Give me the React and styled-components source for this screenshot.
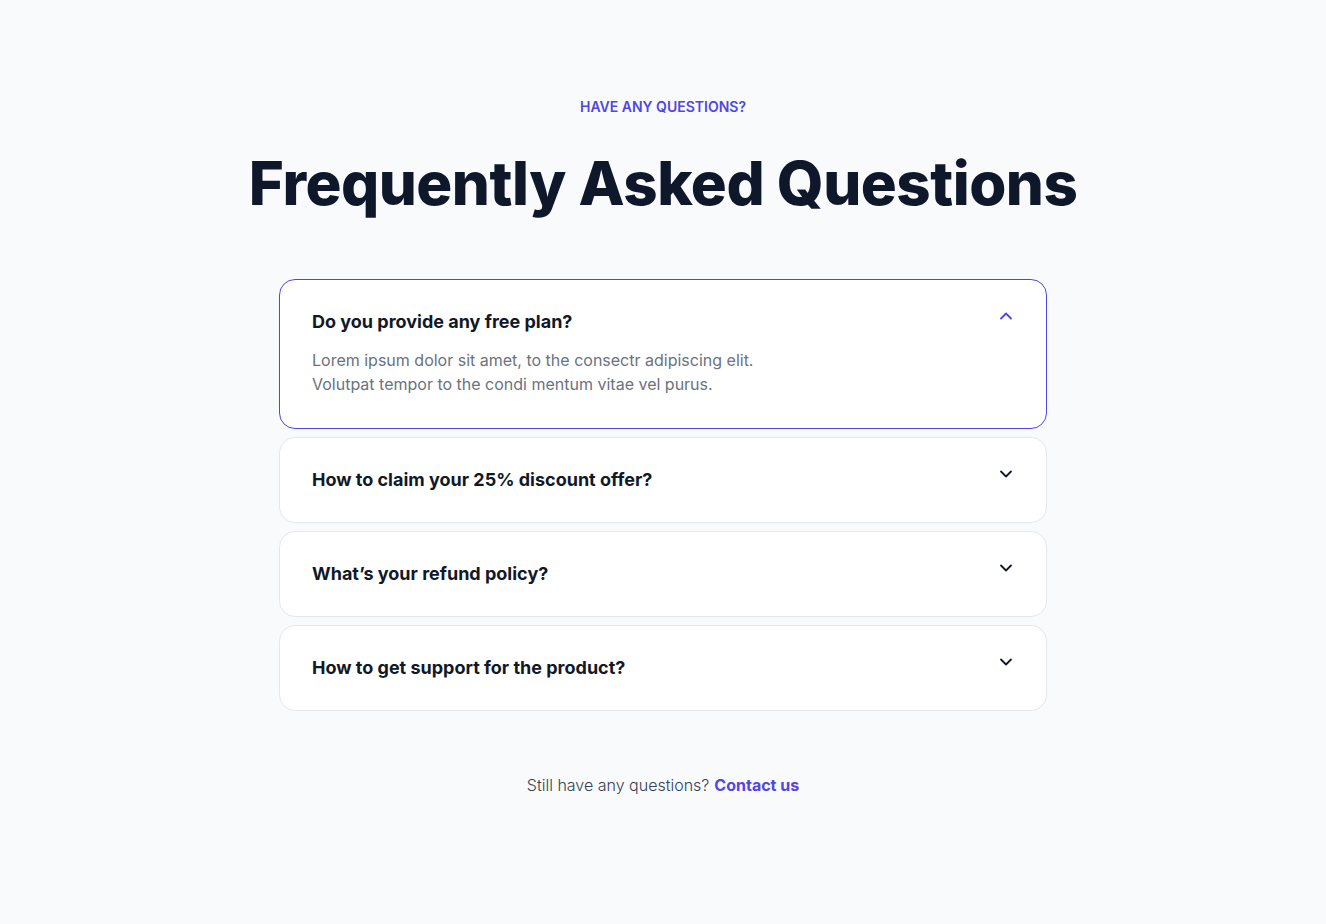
import React, { useState } from 'react';
import styled, { createGlobalStyle } from 'styled-components';

const GlobalStyle = createGlobalStyle`
  body {
    margin: 0;
    background: #f8fafc;
    font-family: Inter, "Noto Sans", sans-serif;
    color: #111827;
  }
`;

const Section = styled.section`
  display: flex;
  flex-direction: column;
  align-items: center;
  padding: 97px 20px 120px;
`;

const Eyebrow = styled.p`
  margin: 0;
  font-size: 14px;
  line-height: 20px;
  font-weight: 600;
  color: #4f46e5;
  text-transform: uppercase;
`;

const Heading = styled.h1`
  margin: 30px 0 0;
  font-size: 60px;
  line-height: 72px;
  font-weight: 800;
  letter-spacing: -0.5px;
  color: #0f172a;
`;

const List = styled.div`
  display: flex;
  flex-direction: column;
  gap: 8px;
  width: 768px;
  margin-top: 60px;
`;

const Card = styled.div`
  background: #ffffff;
  border: 1px solid ${(p) => (p.$open ? '#4f46e5' : '#e5e7eb')};
  border-radius: 16px;
  padding: 28px 32px ${(p) => (p.$open ? '32px' : '28px')};
`;

const Question = styled.button`
  display: flex;
  justify-content: space-between;
  align-items: flex-start;
  width: 100%;
  padding: 0;
  border: 0;
  background: none;
  cursor: pointer;
  text-align: left;
  font-family: inherit;
  font-size: 18px;
  line-height: 28px;
  font-weight: 700;
  color: #111827;
`;

const Chevron = styled.svg`
  flex-shrink: 0;
  color: ${(p) => (p.$open ? '#4f46e5' : '#111827')};
`;

const Answer = styled.p`
  margin: 12px 0 0;
  font-size: 16px;
  line-height: 24px;
  color: #6b7280;
`;

const Footer = styled.p`
  margin: 62px 0 0;
  font-size: 16px;
  line-height: 24px;
  font-weight: 300;
  color: #374151;
`;

const ContactLink = styled.a`
  margin-left: 5px;
  font-weight: 700;
  color: #4f46e5;
  text-decoration: none;
`;

const faqs = [
  {
    q: 'Do you provide any free plan?',
    a: ['Lorem ipsum dolor sit amet, to the consectr adipiscing elit.', 'Volutpat tempor to the condi mentum vitae vel purus.'],
  },
  { q: 'How to claim your 25% discount offer?', a: ['Lorem ipsum dolor sit amet, to the consectr adipiscing elit.'] },
  { q: 'What’s your refund policy?', a: ['Lorem ipsum dolor sit amet, to the consectr adipiscing elit.'] },
  { q: 'How to get support for the product?', a: ['Lorem ipsum dolor sit amet, to the consectr adipiscing elit.'] },
];

function ChevronIcon({ open }) {
  return (
    <Chevron $open={open} width="16" height="16" viewBox="0 0 16 16" fill="none">
      <path
        d={open ? 'M3 10.5 8 5.5l5 5' : 'M3 5.5 8 10.5l5-5'}
        stroke="currentColor"
        strokeWidth="1.8"
        strokeLinecap="round"
        strokeLinejoin="round"
      />
    </Chevron>
  );
}

export default function App() {
  const [open, setOpen] = useState(0);

  return (
    <>
      <GlobalStyle />
      <Section>
        <Eyebrow>Have any questions?</Eyebrow>
        <Heading>Frequently Asked Questions</Heading>
        <List>
          {faqs.map((item, i) => (
            <Card key={item.q} $open={open === i}>
              <Question type="button" onClick={() => setOpen(open === i ? -1 : i)}>
                {item.q}
                <ChevronIcon open={open === i} />
              </Question>
              {open === i && (
                <Answer>
                  {item.a.map((line, j) => (
                    <React.Fragment key={line}>
                      {j > 0 && <br />}
                      {line}
                    </React.Fragment>
                  ))}
                </Answer>
              )}
            </Card>
          ))}
        </List>
        <Footer>
          Still have any questions?
          <ContactLink href="#contact">Contact us</ContactLink>
        </Footer>
      </Section>
    </>
  );
}
